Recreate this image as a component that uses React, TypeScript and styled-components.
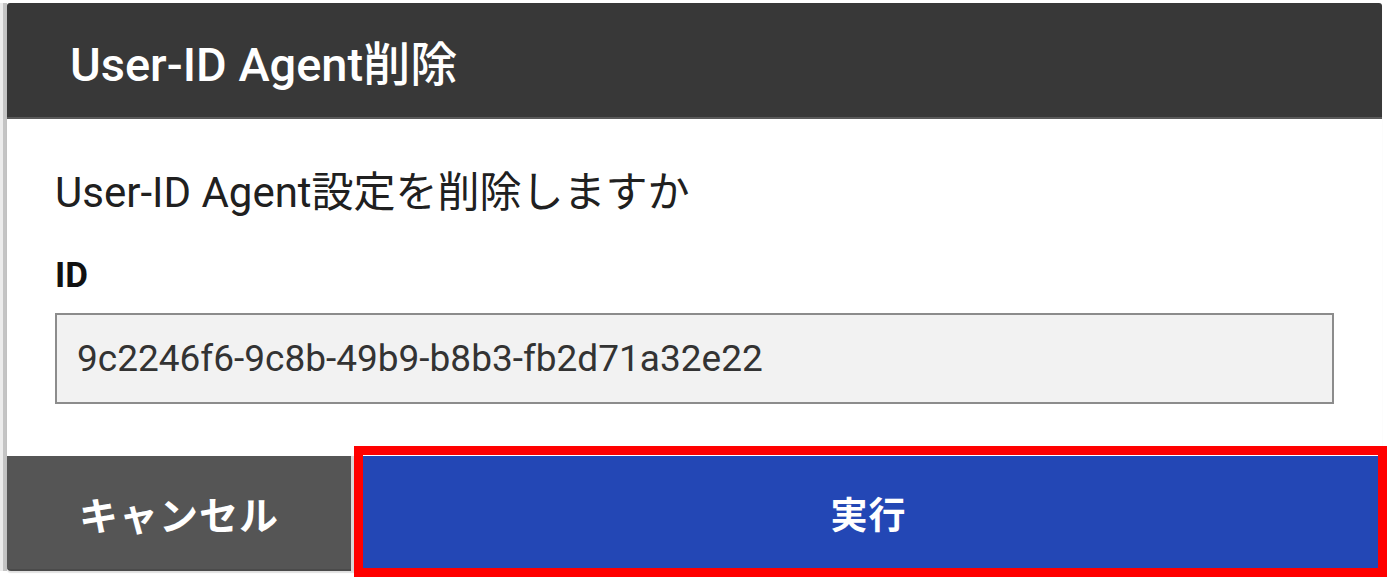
import React from 'react';
import styled, { createGlobalStyle } from 'styled-components';

const GlobalStyle = createGlobalStyle`
  html, body {
    margin: 0;
    padding: 0;
    background: #ffffff;
  }
  body {
    font-family: Roboto, "Noto Sans CJK JP", sans-serif;
  }
`;

const Page = styled.div`
  display: flex;
  width: 1388px;
  height: 582px;
  padding: 3px 6px 0 0;
  box-sizing: border-box;
  background: #ffffff;
`;

const Backdrop = styled.div`
  width: 7px;
  height: 568px;
  flex-shrink: 0;
  background: linear-gradient(to right, #ececec 0 3px, #c4c4c4 3px 7px);
`;

const Dialog = styled.div`
  flex: 1;
  display: flex;
  flex-direction: column;
  height: 568px;
  position: relative;
  box-shadow: 0 2px 1px rgba(0, 0, 0, 0.12);
  border-radius: 3px 3px 4px 4px;
`;

const Header = styled.div`
  height: 114px;
  display: flex;
  align-items: center;
  padding-left: 63px;
  background: #383838;
  border-bottom: 2px solid #5a5a5a;
  border-radius: 3px 3px 0 0;
  color: #ffffff;
  font-size: 47px;
  font-weight: 500;
`;

const Body = styled.div`
  flex: 1;
  display: flex;
  flex-direction: column;
  padding: 49px 48px 0 48px;
  background: #ffffff;
`;

const Message = styled.p`
  margin: 0;
  font-size: 42px;
  line-height: 49px;
  color: #202020;
`;

const FieldLabel = styled.label`
  margin-top: 38px;
  font-size: 35px;
  line-height: 42px;
  font-weight: 700;
  color: #111111;
`;

const IdField = styled.div`
  margin-top: 16px;
  height: 87px;
  display: flex;
  align-items: center;
  padding-left: 20px;
  background: #f2f2f2;
  border: 2px solid #8c8c8c;
  font-size: 37px;
  color: #333333;
`;

const Footer = styled.div`
  height: 115px;
  display: flex;
  gap: 3px;
  background: #d8d8d8;
  border-radius: 0 0 4px 4px;
`;

const FooterButton = styled.button<{ $primary?: boolean }>`
  border: none;
  margin: 0;
  padding: 0;
  display: flex;
  align-items: center;
  justify-content: center;
  font-family: Roboto, "Noto Sans CJK JP", sans-serif;
  font-size: ${({ $primary }) => ($primary ? '37px' : '39px')};
  font-weight: 700;
  letter-spacing: 1px;
  color: #ffffff;
  width: ${({ $primary }) => ($primary ? 'auto' : '344px')};
  flex: ${({ $primary }) => ($primary ? '1' : 'none')};
  background: ${({ $primary }) => ($primary ? '#2347b5' : '#555555')};
  border-radius: ${({ $primary }) => ($primary ? '0 0 3px 0' : '0 0 0 4px')};
  border-bottom: 2px solid ${({ $primary }) => ($primary ? '#5a6fa8' : '#4a4a4a')};
  border-left: ${({ $primary }) => ($primary ? '1px solid #3b5fd0' : 'none')};
`;

const Highlight = styled.div`
  position: absolute;
  left: 347px;
  top: 443px;
  width: 1033px;
  height: 131px;
  box-sizing: border-box;
  border: 9px solid #ff0000;
  pointer-events: none;
`;

export default function App() {
  return (
    <>
      <GlobalStyle />
      <Page>
        <Backdrop />
        <Dialog>
          <Header>User-ID Agent削除</Header>
          <Body>
            <Message>User-ID Agent設定を削除しますか</Message>
            <FieldLabel>ID</FieldLabel>
            <IdField>9c2246f6-9c8b-49b9-b8b3-fb2d71a32e22</IdField>
          </Body>
          <Footer>
            <FooterButton>キャンセル</FooterButton>
            <FooterButton $primary>実行</FooterButton>
          </Footer>
          <Highlight />
        </Dialog>
      </Page>
    </>
  );
}
